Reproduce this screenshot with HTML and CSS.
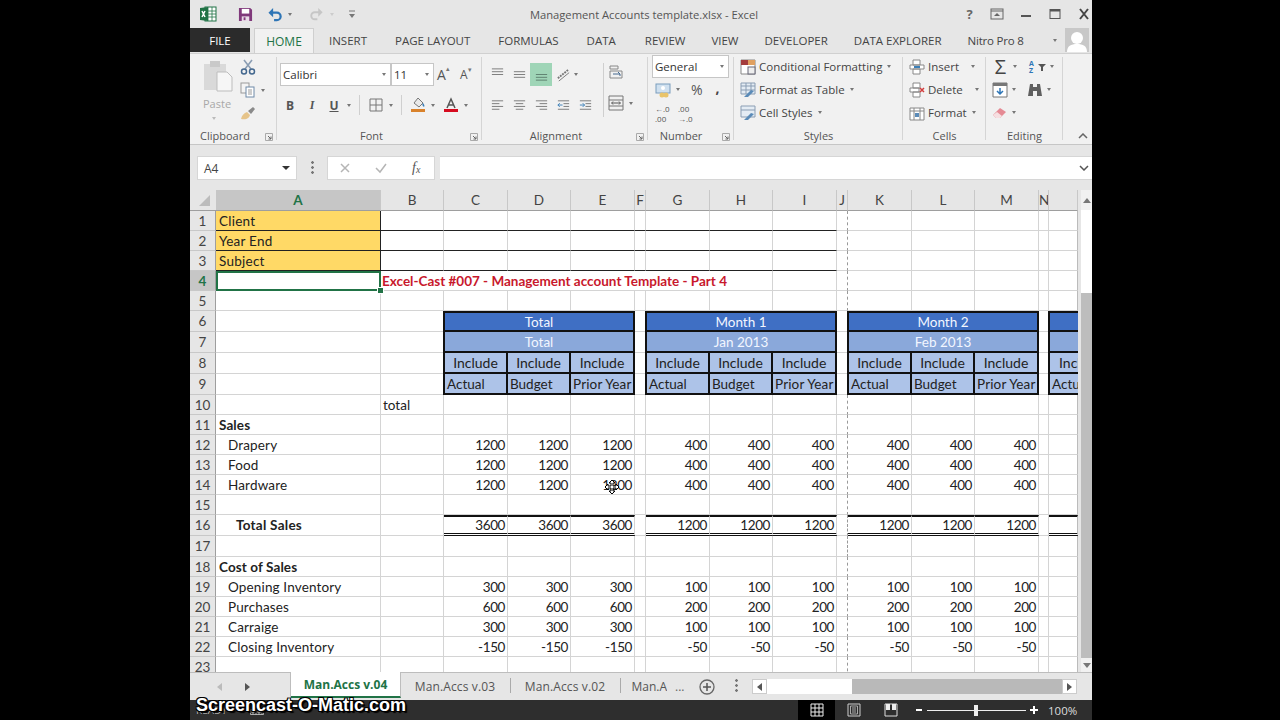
FILE: index.html
```html
<!DOCTYPE html>
<html lang="en">
<head>
<meta charset="utf-8">
<title>Management Accounts template.xlsx - Excel</title>
<link rel="stylesheet" href="styles.css">
</head>
<body>
<div class="app">
  <header class="titlebar">
    <div class="qat">
      <svg class="ic xl" viewBox="0 0 18 18"><rect x="6" y="2" width="11" height="14" fill="#fff" stroke="#217346"/><path d="M9 2v14M13 2v14M6 6h11M6 9h11M6 12h11" stroke="#217346" stroke-width=".8"/><path d="M1 3l8-1v14l-8-1z" fill="#217346"/><path d="M3 6l3 6M6 6l-3 6" stroke="#fff" stroke-width="1.5"/></svg>
      <svg class="ic save" viewBox="0 0 16 16"><path d="M1 1h12l2 2v12H1z" fill="#80397b"/><rect x="4" y="2" width="8" height="5" fill="#fff"/><rect x="4" y="10" width="8" height="5" fill="#e8dbe7"/><rect x="6" y="11" width="2" height="3" fill="#80397b"/></svg>
      <svg class="ic undo" viewBox="0 0 16 16"><path d="M3 6h7a4 4 0 0 1 0 8H7" fill="none" stroke="#2e75b6" stroke-width="2.4"/><path d="M6 1L1 6l5 5z" fill="#2e75b6"/></svg><i class="car q1"></i>
      <svg class="ic redo" viewBox="0 0 16 16"><path d="M13 6H6a4 4 0 0 0 0 8h3" fill="none" stroke="#c6c6c6" stroke-width="2.2"/><path d="M10 1l5 5-5 5z" fill="#c6c6c6"/></svg><i class="car q2"></i>
      <svg class="ic cust" viewBox="0 0 8 10"><path d="M1 2h6" stroke="#777"/><path d="M1 5h6L4 9z" fill="#777"/></svg>
    </div>
    <div class="doc">Management Accounts template.xlsx - Excel</div>
    <div class="win">
      <span class="help">?</span>
      <svg class="wb" viewBox="0 0 14 12"><rect x="1" y="1" width="12" height="10" fill="none" stroke="#666"/><path d="M1 3h12" stroke="#666"/><path d="M7 5l3 3H4z" fill="#666"/></svg>
      <svg class="wb" viewBox="0 0 14 12"><path d="M2 8h10" stroke="#555" stroke-width="2"/></svg>
      <svg class="wb" viewBox="0 0 14 12"><rect x="2" y="1.5" width="10" height="9" fill="none" stroke="#555"/><path d="M2 2.5h10" stroke="#555" stroke-width="2"/></svg>
      <svg class="wb" viewBox="0 0 14 12"><path d="M3 1l8 10M11 1l-8 10" stroke="#444" stroke-width="2"/></svg>
    </div>
  </header>

  <nav class="tabs">
    <span class="file">FILE</span>
    <span class="home">HOME</span>
    <div class="tablist">
      <span>INSERT</span><span>PAGE LAYOUT</span><span>FORMULAS</span><span>DATA</span><span class="m0">REVIEW</span><span class="m1">VIEW</span><span class="m2">DEVELOPER</span><span class="m2">DATA EXPLORER</span><span class="m1 nitro">Nitro Pro 8</span>
    </div>
    <i class="car tabcar"></i>
    <svg class="avatar" viewBox="0 0 24 24"><rect width="24" height="24" fill="#c8c8c8"/><circle cx="12" cy="10" r="6" fill="#fff"/><path d="M2 24c0-6 4-8 10-8s10 2 10 8z" fill="#fff"/></svg>
  </nav>

  <section class="ribbon">
    <div class="grp g-clip">
      <div class="gbody clip">
        <div class="paste">
          <svg class="bigic" viewBox="0 0 30 32"><rect x="1" y="4" width="22" height="26" fill="#d9d9d9"/><rect x="7" y="1" width="10" height="6" fill="#c9c9c9"/><path d="M14 12h10l5 5v14H14z" fill="#f6f6f6" stroke="#bdbdbd"/></svg>
          <span class="pl">Paste</span><i class="car pc"></i>
        </div>
        <div class="cliptools">
          <svg class="ci" viewBox="0 0 16 16"><path d="M4 1l7 9M12 1L5 10" stroke="#8a9db3" stroke-width="1.6"/><circle cx="4" cy="12.5" r="2.5" fill="none" stroke="#44688f" stroke-width="1.5"/><circle cx="12" cy="12.5" r="2.5" fill="none" stroke="#44688f" stroke-width="1.5"/></svg>
          <div class="cirow"><svg class="ci" viewBox="0 0 16 16"><rect x="1" y="1" width="8" height="10" fill="#f4f4f4" stroke="#9a9a9a"/><rect x="6" y="5" width="8" height="10" fill="#fff" stroke="#6f8aa8"/><path d="M8 8h4M8 10h4M8 12h4" stroke="#9a9a9a"/></svg><i class="car"></i></div>
          <svg class="ci" viewBox="0 0 16 16"><path d="M1 14c1-4 3-6 6-7l3 3c-1 3-3 5-9 4z" fill="#e6c48a"/><path d="M8 6l5-4 2 2-4 5z" fill="#8a8a8a"/></svg>
        </div>
      </div>
      <div class="glabel lbl-clip"><span>Clipboard</span><svg class="launch" viewBox="0 0 8 8"><path d="M.5 .5h7v7h-7z" fill="none" stroke="#aaa"/><path d="M3 3l3 3M6 3.500V6H3.500" fill="none" stroke="#666"/></svg></div>
    </div>

    <div class="grp g-font">
      <div class="gbody fontb">
        <div class="frow">
          <div class="sel fname"><span>Calibri</span><i class="car"></i></div>
          <div class="sel fsize"><span>11</span><i class="car"></i></div>
          <span class="agrow">A<sup>▴</sup></span><span class="ashrink">A<sup>▾</sup></span>
        </div>
        <div class="frow f2">
          <b class="fb">B</b><em class="fi">I</em><u class="fu">U</u><i class="car"></i><span class="vs"></span>
          <svg class="ai" viewBox="0 0 16 16"><path d="M2 2h12v12H2zM8 2v12M2 8h12" fill="none" stroke="#777"/></svg><i class="car"></i><span class="vs"></span>
          <svg class="ai" viewBox="0 0 16 16"><path d="M8 1l5 5-4 4-5-4z" fill="#e9e9e9" stroke="#777"/><path d="M13 6c1 1 2 3 1 4-2-1-2-3-1-4z" fill="#3b7fb8"/><rect x="1" y="12" width="14" height="3" fill="#d9822b"/></svg><i class="car"></i>
          <svg class="ai acol" viewBox="0 0 16 16"><path d="M4 11L8 2l4 9M5.500 8h5" fill="none" stroke="#555" stroke-width="1.500"/><rect x="1" y="12" width="14" height="3" fill="#d60b1f"/></svg><i class="car"></i>
        </div>
      </div>
      <div class="glabel lbl-font"><span>Font</span><svg class="launch" viewBox="0 0 8 8"><path d="M.5 .5h7v7h-7z" fill="none" stroke="#aaa"/><path d="M3 3l3 3M6 3.500V6H3.500" fill="none" stroke="#666"/></svg></div>
    </div>

    <div class="grp g-align">
      <div class="gbody alignb">
        <div class="arows">
          <div class="arow">
            <span class="ab"><svg viewBox="0 0 16 16"><path d="M2 2h12M2 5h12M2 8h12" stroke="#777"/></svg></span>
            <span class="ab"><svg viewBox="0 0 16 16"><path d="M2 5h12M2 8h12M2 11h12" stroke="#777"/></svg></span>
            <span class="ab on"><svg viewBox="0 0 16 16"><path d="M2 8h12M2 11h12M2 14h12" stroke="#5d7f6e"/></svg></span>
            <span class="ab"><svg viewBox="0 0 16 16"><path d="M2 12L13 3" stroke="#777" stroke-width="2" stroke-dasharray="2 1"/><path d="M3 15l11-9" stroke="#777"/></svg></span><i class="car"></i>
          </div>
          <div class="arow">
            <span class="ab"><svg viewBox="0 0 16 16"><path d="M2 3h12M2 6h8M2 9h12M2 12h8" stroke="#777"/></svg></span>
            <span class="ab"><svg viewBox="0 0 16 16"><path d="M2 3h12M4 6h8M2 9h12M4 12h8" stroke="#777"/></svg></span>
            <span class="ab"><svg viewBox="0 0 16 16"><path d="M2 3h12M6 6h8M2 9h12M6 12h8" stroke="#777"/></svg></span>
            <span class="ab"><svg viewBox="0 0 16 16"><path d="M2 3h12M8 6h6M8 9h6M2 12h12" stroke="#777"/><path d="M2 7.500h5M4 5.500l-2 2 2 2" fill="none" stroke="#3b7fb8"/></svg></span>
            <span class="ab"><svg viewBox="0 0 16 16"><path d="M2 3h12M8 6h6M8 9h6M2 12h12" stroke="#777"/><path d="M2 7.500h5M5 5.500l2 2-2 2" fill="none" stroke="#3b7fb8"/></svg></span>
          </div>
        </div>
        <span class="vs tall"></span>
        <div class="acol2">
          <svg class="ai" viewBox="0 0 16 16"><path d="M2 2h8v3H2zM2 7h12v7H2z" fill="none" stroke="#888"/><path d="M5 10h7l-2-2M12 10v2" fill="none" stroke="#44688f"/></svg>
          <div class="cirow"><svg class="ai" viewBox="0 0 16 16"><path d="M1 1h14v14H1zM1 5h14M1 11h14" fill="none" stroke="#777"/><path d="M4 8h8M5 6.500L3.500 8 5 9.500M11 6.500L12.500 8 11 9.500" fill="none" stroke="#555"/></svg><i class="car"></i></div>
        </div>
      </div>
      <div class="glabel lbl-align"><span>Alignment</span><svg class="launch" viewBox="0 0 8 8"><path d="M.5 .5h7v7h-7z" fill="none" stroke="#aaa"/><path d="M3 3l3 3M6 3.500V6H3.500" fill="none" stroke="#666"/></svg></div>
    </div>

    <div class="grp g-num">
      <div class="gbody numb">
        <div class="sel nfmt"><span>General</span><i class="car"></i></div>
        <div class="nrow">
          <svg class="ai" viewBox="0 0 16 16"><rect x="1" y="2" width="14" height="9" fill="#cfe0ef" stroke="#7b9dbd"/><circle cx="8" cy="6" r="2" fill="#fff"/><circle cx="7" cy="13" r="2.500" fill="#e9c46a"/><circle cx="11" cy="13" r="2.500" fill="#e9c46a"/></svg><i class="car"></i>
          <span class="pct">%</span><span class="comma">,</span>
        </div>
        <div class="nrow n3">
          <span class="dec"><i>←.0</i><i>.00</i></span><span class="dec"><i>.00</i><i>→.0</i></span>
        </div>
      </div>
      <div class="glabel lbl-num"><span>Number</span><svg class="launch" viewBox="0 0 8 8"><path d="M.5 .5h7v7h-7z" fill="none" stroke="#aaa"/><path d="M3 3l3 3M6 3.500V6H3.500" fill="none" stroke="#666"/></svg></div>
    </div>

    <div class="grp g-sty">
      <div class="gbody list">
        <div class="li"><svg class="ai" viewBox="0 0 16 16"><path d="M1 1h14v14H1z" fill="#fff" stroke="#888"/><rect x="1" y="1" width="7" height="5" fill="#a33c3c"/><rect x="8" y="1" width="7" height="5" fill="#e0a060"/><rect x="8" y="8" width="7" height="7" fill="#eee" stroke="#667"/></svg><span>Conditional Formatting</span><i class="car"></i></div>
        <div class="li"><svg class="ai" viewBox="0 0 16 16"><path d="M1 1h14v11H1z" fill="#e4ecf4" stroke="#8a9db3"/><path d="M1 4h14M1 8h14M6 1v11M11 1v11" stroke="#8a9db3"/><path d="M4 15l7-7 3 1-6 6z" fill="#5b8bb8"/></svg><span>Format as Table</span><i class="car"></i></div>
        <div class="li"><svg class="ai" viewBox="0 0 16 16"><path d="M1 1h14v11H1z" fill="#e4ecf4" stroke="#8a9db3"/><path d="M1 5h14" stroke="#8a9db3"/><path d="M4 15l7-7 3 1-6 6z" fill="#5b8bb8"/></svg><span>Cell Styles</span><i class="car"></i></div>
      </div>
      <div class="glabel"><span>Styles</span></div>
    </div>

    <div class="grp g-cell">
      <div class="gbody list">
        <div class="li"><svg class="ai" viewBox="0 0 16 16"><path d="M4 1h7v5H4zM1 6h14v4H1zM4 10h7v5H4z" fill="#fff" stroke="#888"/><path d="M5 8h6" stroke="#3b7fb8" stroke-width="2"/></svg><span>Insert</span><i class="car gapc"></i></div>
        <div class="li"><svg class="ai" viewBox="0 0 16 16"><path d="M4 1h7v5H4zM1 6h9v4H1zM4 10h7v5H4z" fill="#fff" stroke="#888"/><path d="M11 6l4 4M15 6l-4 4" stroke="#d23c3c" stroke-width="1.500"/></svg><span>Delete</span><i class="car gapc"></i></div>
        <div class="li"><svg class="ai" viewBox="0 0 16 16"><path d="M1 3h14v12H1zM1 6h14M5 3v12M11 3v12" fill="#fff" stroke="#888"/><rect x="6" y="8" width="4" height="4" fill="#5b8bb8"/></svg><span>Format</span><i class="car"></i></div>
      </div>
      <div class="glabel"><span>Cells</span></div>
    </div>

    <div class="grp g-edit">
      <div class="gbody editb">
        <div class="erow"><span class="sum">Σ</span><i class="car"></i><span class="az"><b>A</b><b>Z</b></span><svg class="fn" viewBox="0 0 8 8"><path d="M0 1h8L5 4v4H3V4z" fill="#555"/></svg><i class="car"></i></div>
        <div class="erow"><svg class="ai" viewBox="0 0 16 16"><path d="M1 1h14v14H1z" fill="#fff" stroke="#777"/><path d="M1 1h14v3H1z" fill="#777"/><path d="M8 6v6M5 9l3 3 3-3" fill="none" stroke="#2e75b6" stroke-width="1.500"/></svg><i class="car e1"></i><svg class="ai bino" viewBox="0 0 16 16"><path d="M3 2h3v3h4V2h3l2 12h-5V9H6v5H1z" fill="#5f5f5f"/></svg><i class="car"></i></div>
        <div class="erow"><svg class="ai" viewBox="0 0 16 16"><path d="M1 10l7-7 6 4-6 6H4z" fill="#e58a94"/><path d="M1 10l3 3h4l2-2-5-4z" fill="#f6dfe1"/></svg><i class="car"></i></div>
      </div>
      <div class="glabel"><span>Editing</span></div>
    </div>
    <svg class="collapse" viewBox="0 0 10 6"><path d="M1 5l4-4 4 4" fill="none" stroke="#666" stroke-width="1.500"/></svg>
  </section>

  <section class="fbar">
    <div class="namebox"><span>A4</span><i class="car dark"></i></div>
    <span class="dots"></span>
    <div class="fbtns">
      <svg class="fx-ic" viewBox="0 0 12 12"><path d="M2 2l8 8M10 2l-8 8" stroke="#b5b5b5" stroke-width="1.500"/></svg>
      <svg class="fx-ic" viewBox="0 0 12 12"><path d="M1 6l4 4 6-8" fill="none" stroke="#b5b5b5" stroke-width="1.500"/></svg>
      <span class="fx">f<sub>x</sub></span>
    </div>
    <div class="finput"><svg class="chev" viewBox="0 0 10 6"><path d="M1 1l4 4 4-4" fill="none" stroke="#555" stroke-width="1.500"/></svg></div>
  </section>

  <section class="sheet">
    <div class="gridwrap">
      <table class="grid">
        <colgroup><col class="c-rh"><col class="c-a"><col class="c-63"><col class="c-64"><col class="c-63"><col class="c-64"><col class="c-11"><col class="c-64"><col class="c-63"><col class="c-64"><col class="c-11"><col class="c-64"><col class="c-63"><col class="c-64"><col class="c-10"><col class="c-29"></colgroup>
        <tr class="h21 ch"><td class="corner"><svg viewBox="0 0 12 12"><path d="M12 1v11H1z" fill="#bcbcbc"/></svg></td><td class="sel-h">A</td><td>B</td><td>C</td><td>D</td><td>E</td><td>F</td><td>G</td><td>H</td><td>I</td><td>J</td><td>K</td><td>L</td><td>M</td><td>N</td><td></td></tr>
        <tr class="h20"><td class="rh">1</td><td class="yel">Client</td><td class="ul"></td><td class="ul"></td><td class="ul"></td><td class="ul"></td><td class="ul"></td><td class="ul"></td><td class="ul"></td><td class="ul"></td><td class="j"></td><td></td><td></td><td></td><td></td><td></td></tr>
        <tr class="h20"><td class="rh">2</td><td class="yel">Year End</td><td class="ul"></td><td class="ul"></td><td class="ul"></td><td class="ul"></td><td class="ul"></td><td class="ul"></td><td class="ul"></td><td class="ul"></td><td class="j"></td><td></td><td></td><td></td><td></td><td></td></tr>
        <tr class="h20"><td class="rh">3</td><td class="yel">Subject</td><td class="ul"></td><td class="ul"></td><td class="ul"></td><td class="ul"></td><td class="ul"></td><td class="ul"></td><td class="ul"></td><td class="ul"></td><td class="j"></td><td></td><td></td><td></td><td></td><td></td></tr>
        <tr class="h20"><td class="rh sel-h">4</td><td class="active"><span class="handle"></span></td><td class="title" colspan="7">Excel-Cast #007 - Management account Template - Part 4</td><td></td><td class="j"></td><td></td><td></td><td></td><td></td><td></td></tr>
        <tr class="h20"><td class="rh">5</td><td></td><td></td><td></td><td></td><td></td><td></td><td></td><td></td><td></td><td class="j"></td><td></td><td></td><td></td><td></td><td></td></tr>
        <tr class="h21"><td class="rh">6</td><td></td><td></td><td class="b1 first" colspan="3">Total</td><td></td><td class="b1 first" colspan="3">Month 1</td><td class="j"></td><td class="b1 first" colspan="3">Month 2</td><td></td><td class="b1 first cut"></td></tr>
        <tr class="h21"><td class="rh">7</td><td></td><td></td><td class="b2 first" colspan="3">Total</td><td></td><td class="b2 first" colspan="3">Jan 2013</td><td class="j"></td><td class="b2 first" colspan="3">Feb 2013</td><td></td><td class="b2 first cut"></td></tr>
        <tr class="h21"><td class="rh">8</td><td></td><td></td><td class="b3 ctr first">Include</td><td class="b3 ctr">Include</td><td class="b3 ctr">Include</td><td></td><td class="b3 ctr first">Include</td><td class="b3 ctr">Include</td><td class="b3 ctr">Include</td><td class="j"></td><td class="b3 ctr first">Include</td><td class="b3 ctr">Include</td><td class="b3 ctr">Include</td><td></td><td class="b3 first cut inc">Include</td></tr>
        <tr class="h21"><td class="rh">9</td><td></td><td></td><td class="b3 first">Actual</td><td class="b3">Budget</td><td class="b3 tight">Prior Year</td><td></td><td class="b3 first">Actual</td><td class="b3">Budget</td><td class="b3 tight">Prior Year</td><td class="j"></td><td class="b3 first">Actual</td><td class="b3">Budget</td><td class="b3 tight">Prior Year</td><td></td><td class="b3 first cut">Actual</td></tr>
        <tr class="h20"><td class="rh">10</td><td></td><td>total</td><td></td><td></td><td></td><td></td><td></td><td></td><td></td><td class="j"></td><td></td><td></td><td></td><td></td><td></td></tr>
        <tr class="h20"><td class="rh">11</td><td class="lab bold">Sales</td><td></td><td></td><td></td><td></td><td></td><td></td><td></td><td></td><td class="j"></td><td></td><td></td><td></td><td></td><td></td></tr>
        <tr class="h20"><td class="rh">12</td><td class="i1">Drapery</td><td></td><td class="n">1200</td><td class="n">1200</td><td class="n">1200</td><td></td><td class="n">400</td><td class="n">400</td><td class="n">400</td><td class="j"></td><td class="n">400</td><td class="n">400</td><td class="n">400</td><td></td><td></td></tr>
        <tr class="h20"><td class="rh">13</td><td class="i1">Food</td><td></td><td class="n">1200</td><td class="n">1200</td><td class="n">1200</td><td></td><td class="n">400</td><td class="n">400</td><td class="n">400</td><td class="j"></td><td class="n">400</td><td class="n">400</td><td class="n">400</td><td></td><td></td></tr>
        <tr class="h20"><td class="rh">14</td><td class="i1">Hardware</td><td></td><td class="n">1200</td><td class="n">1200</td><td class="n">1200</td><td></td><td class="n">400</td><td class="n">400</td><td class="n">400</td><td class="j"></td><td class="n">400</td><td class="n">400</td><td class="n">400</td><td></td><td></td></tr>
        <tr class="h20"><td class="rh">15</td><td></td><td></td><td></td><td></td><td></td><td></td><td></td><td></td><td></td><td class="j"></td><td></td><td></td><td></td><td></td><td></td></tr>
        <tr class="h21"><td class="rh">16</td><td class="i2 bold">Total Sales</td><td></td><td class="n tot">3600</td><td class="n tot">3600</td><td class="n tot">3600</td><td></td><td class="n tot">1200</td><td class="n tot">1200</td><td class="n tot">1200</td><td class="j"></td><td class="n tot">1200</td><td class="n tot">1200</td><td class="n tot">1200</td><td></td><td class="tot"></td></tr>
        <tr class="h21"><td class="rh">17</td><td></td><td></td><td></td><td></td><td></td><td></td><td></td><td></td><td></td><td class="j"></td><td></td><td></td><td></td><td></td><td></td></tr>
        <tr class="h20"><td class="rh">18</td><td class="lab bold">Cost of Sales</td><td></td><td></td><td></td><td></td><td></td><td></td><td></td><td></td><td class="j"></td><td></td><td></td><td></td><td></td><td></td></tr>
        <tr class="h20"><td class="rh">19</td><td class="i1">Opening Inventory</td><td></td><td class="n">300</td><td class="n">300</td><td class="n">300</td><td></td><td class="n">100</td><td class="n">100</td><td class="n">100</td><td class="j"></td><td class="n">100</td><td class="n">100</td><td class="n">100</td><td></td><td></td></tr>
        <tr class="h20"><td class="rh">20</td><td class="i1">Purchases</td><td></td><td class="n">600</td><td class="n">600</td><td class="n">600</td><td></td><td class="n">200</td><td class="n">200</td><td class="n">200</td><td class="j"></td><td class="n">200</td><td class="n">200</td><td class="n">200</td><td></td><td></td></tr>
        <tr class="h20"><td class="rh">21</td><td class="i1">Carraige</td><td></td><td class="n">300</td><td class="n">300</td><td class="n">300</td><td></td><td class="n">100</td><td class="n">100</td><td class="n">100</td><td class="j"></td><td class="n">100</td><td class="n">100</td><td class="n">100</td><td></td><td></td></tr>
        <tr class="h20"><td class="rh">22</td><td class="i1">Closing Inventory</td><td></td><td class="n">-150</td><td class="n">-150</td><td class="n">-150</td><td></td><td class="n">-50</td><td class="n">-50</td><td class="n">-50</td><td class="j"></td><td class="n">-50</td><td class="n">-50</td><td class="n">-50</td><td></td><td></td></tr>
        <tr class="h20"><td class="rh">23</td><td></td><td></td><td></td><td></td><td></td><td></td><td></td><td></td><td></td><td class="j"></td><td></td><td></td><td></td><td></td><td></td></tr>
      </table>
      <svg class="cursor" viewBox="0 0 16 16"><path d="M8 1l3 3H9v3h3V5l3 3-3 3V9H9v3h2l-3 3-3-3h2V9H4v2L1 8l3-3v2h3V4H5z" fill="#fff" stroke="#000"/></svg>
    </div>
    <div class="vscroll">
      <span class="sb-btn"><i class="tri up"></i></span>
      <span class="sb-track"><span class="sb-thumb"></span></span>
      <span class="sb-btn dn"><i class="tri down"></i></span>
    </div>
  </section>

  <section class="sheets">
    <div class="navs"><i class="tri left pale"></i><i class="tri right"></i></div>
    <span class="stab act">Man.Accs v.04</span>
    <span class="stab s1">Man.Accs v.03</span>
    <span class="stab s1">Man.Accs v.02</span>
    <span class="stab s2">Man.A</span>
    <span class="more">...</span>
    <svg class="plus" viewBox="0 0 16 16"><circle cx="8" cy="8" r="7" fill="none" stroke="#666" stroke-width="1.300"/><path d="M4 8h8M8 4v8" stroke="#555" stroke-width="1.500"/></svg>
    <span class="dots sd"></span>
    <div class="hscroll">
      <span class="hb"><i class="tri left"></i></span>
      <span class="hthumb"></span>
      <span class="htrack"></span>
      <span class="hb"><i class="tri right"></i></span>
    </div>
  </section>

  <footer class="status">
    <span class="ready">READY</span>
    <svg class="kbd" viewBox="0 0 14 10"><path d="M.5 4.500h13v5H.5zM3 4.500v5M6 4.500v5M9 4.500v5M12 4.500v5M.5 7h13" fill="none" stroke="#ccc" stroke-width=".8"/></svg>
    <div class="sright">
      <span class="view on"><svg viewBox="0 0 14 14"><path d="M1 1h12v12H1zM5 1v12M9 1v12M1 5h12M1 9h12" fill="none" stroke="#eee"/></svg></span>
      <span class="view"><svg viewBox="0 0 14 14"><path d="M1 1h12v12H1z" fill="none" stroke="#ccc"/><path d="M3.500 3h7v8h-7zM5 5h4M5 7h4M5 9h4" fill="none" stroke="#ccc" stroke-width=".8"/></svg></span>
      <span class="view"><svg viewBox="0 0 14 14"><path d="M1 1h12v12H1z" fill="none" stroke="#ddd"/><path d="M2 1h4v6H2zM8 1h4v6H8z" fill="#eee"/></svg></span>
      <div class="zoom">
        <svg class="zi" viewBox="0 0 8 8"><path d="M1 4h6" stroke="#fff" stroke-width="2"/></svg>
        <span class="ztrack"><span class="zthumb"></span></span>
        <svg class="zi" viewBox="0 0 8 8"><path d="M0 4h8M4 0v8" stroke="#fff" stroke-width="2"/></svg>
      </div>
      <span class="pc100">100%</span>
    </div>
  </footer>
  <div class="wm">Screencast-O-Matic.com</div>
</div>
</body>
</html>
```
FILE: styles.css
```css
* { box-sizing: border-box; }
html, body { margin: 0; height: 100%; background: #000; overflow: hidden; }
body { display: flex; justify-content: flex-start; padding-left: 190px; }
.app {
  position: relative; width: 902px; height: 720px; display: flex; flex-direction: column;
  background: #e6e6e6; color: #444; font: 12px "Open Sans", sans-serif; overflow: hidden;
}
i { font-style: normal; }

.car { display: inline-block; width: 0; height: 0; border: 2.5px solid transparent; border-top: 3px solid #777; border-bottom: 0; flex: none; }
.car.dark { border-top-color: #333; border-width: 4px 4px 0; }

/* title bar */
.titlebar { height: 28px; flex: none; display: flex; align-items: center; position: relative; }
.qat { display: flex; align-items: center; padding-left: 9px; width: 339px; flex: none; }
.ic { display: block; flex: none; }
.xl { width: 18px; height: 18px; }
.save { width: 15px; height: 15px; margin-left: 21px; }
.undo { width: 16px; height: 15px; margin-left: 14px; }
.q1 { margin: 0 0 0 5px; }
.redo { width: 15px; height: 14px; margin-left: 17px; }
.q2 { margin-left: 6px; border-top-color: #ccc; }
.cust { width: 8px; height: 10px; margin-left: 14px; }
.doc { width: 230px; text-align: center; white-space: nowrap; color: #555; font-size: 11.2px; }
.win { margin-left: auto; display: flex; align-items: center; width: 132px; padding-right: 1px; }
.help { width: 17px; margin-left: 4px; font-weight: 700; font-size: 13px; color: #666; text-align: center; }
.wb { width: 14px; height: 12px; margin-left: 15px; flex: none; }

/* tabs */
.tabs { height: 25px; flex: none; display: flex; align-items: stretch; position: relative; }
.file { width: 60px; height: 24px; background: #2b2b2b; color: #fff; display: flex; align-items: center; justify-content: center; font-size: 11.5px; }
.home { width: 60px; margin-left: 4px; background: #f1f1f1; border: 1px solid #cfcfcf; border-bottom: 0; color: #217346; display: flex; align-items: center; justify-content: center; font-size: 12px; }
.tablist { display: flex; align-items: center; gap: 28px; padding-left: 15px; font-size: 11.5px; color: #444; white-space: nowrap; width: 739px; flex: none; }
.m0 { margin-left: 1px; }
.m1 { margin-left: -2px; }
.m2 { margin-left: -2px; }
.nitro { letter-spacing: -.2px; }
.tabcar { align-self: center; }
.avatar { width: 24px; height: 24px; margin-left: 8px; flex: none; }

/* ribbon */
.ribbon { height: 92px; flex: none; display: flex; background: #f1f1f1; border-top: 1px solid #d0d0d0; border-bottom: 1px solid #c6c6c6; position: relative; color: #444; }
.grp { display: flex; flex-direction: column; flex: none; position: relative; }
.grp::after { content: ""; position: absolute; right: 0; top: 3px; bottom: 4px; width: 1px; background: #d5d5d5; }
.gbody { height: 73px; flex: none; }
.glabel { height: 17px; display: flex; align-items: center; justify-content: center; font-size: 11px; color: #555; position: relative; }
.launch { width: 8px; height: 8px; position: absolute; right: 4px; top: 6px; }
.g-clip { width: 87px; }
.g-font { width: 205px; }
.g-align { width: 166px; }
.g-num { width: 86px; }
.g-sty { width: 169px; }
.g-cell { width: 83px; }
.g-edit { width: 77px; }
.lbl-clip { justify-content: flex-start; padding-left: 10px; }
.lbl-font { padding-right: 16px; }
.lbl-align { padding-right: 18px; }
.lbl-num { padding-right: 20px; }
.collapse { width: 10px; height: 6px; position: absolute; right: 4px; top: 79px; }

.clip { display: flex; }
.paste { width: 50px; padding: 6px 0 0 13px; display: flex; flex-direction: column; align-items: flex-start; }
.bigic { width: 30px; height: 32px; }
.pl { font-size: 11px; color: #a8a8a8; margin-top: 4px; line-height: 15px; }
.pc { margin: 6px 0 0 9px; border-top-color: #bbb; }
.cliptools { display: flex; flex-direction: column; padding-top: 5px; gap: 7px; }
.ci { width: 16px; height: 16px; display: block; flex: none; }
.cirow { display: flex; align-items: center; gap: 5px; }

.fontb { padding: 9px 0 0 3px; }
.frow { display: flex; align-items: center; }
.sel { background: #fff; border: 1px solid #c6c6c6; display: flex; align-items: center; justify-content: space-between; padding: 0 4px 0 2px; font-size: 11.5px; color: #333; }
.fname { width: 111px; height: 23px; }
.fsize { width: 43px; height: 23px; }
.agrow, .ashrink { font-size: 13px; position: relative; color: #555; }
.agrow { margin-left: 3px; font-size: 14px; width: 23px; }
.ashrink { width: 18px; font-size: 12px; }
.agrow sup, .ashrink sup { font-size: 7px; color: #777; position: absolute; top: -1px; margin-left: 0; }
.f2 { margin-top: 9px; height: 20px; }
.fb, .fi, .fu { font-size: 12px; color: #555; text-align: center; flex: none; }
.fb { font-family: "Open Sans", sans-serif; width: 20px; }
.fi { width: 24px; font-family: "Liberation Serif", serif; font-weight: 700; }
.fu { width: 20px; font-family: "Open Sans", sans-serif; font-weight: 700; }
.f2 .car { margin-left: 3px; }
.vs { width: 1px; height: 20px; background: #cfcfcf; margin: 0 8px 0 8px; flex: none; }
.ai { width: 16px; height: 16px; display: block; flex: none; }
.f2 .ai { margin-right: 2px; }
.f2 .acol { margin-left: 8px; }

.alignb { display: flex; padding: 9px 0 0 4px; }
.arow { display: flex; align-items: center; height: 23px; }
.arow + .arow { margin-top: 8px; }
.ab { width: 22px; height: 23px; display: flex; align-items: center; justify-content: center; flex: none; }
.ab svg { width: 15px; height: 15px; display: block; }
.ab.on { background: #9fd5b7; }
.vs.tall { height: 54px; margin: 0 4px 0 auto; }
.acol2 { display: flex; flex-direction: column; gap: 15px; padding-top: 1px; width: 40px; flex: none; }

.numb { padding: 1px 0 0 4px; }
.nfmt { width: 77px; height: 23px; }
.nrow { display: flex; align-items: center; padding: 0 0 0 3px; height: 23px; }
.nrow.n3 { margin-top: 1px; }
.nrow .car { margin-left: 5px; }
.pct { font-size: 14px; margin-left: 11px; color: #555; }
.comma { font-size: 14px; font-weight: 700; margin-left: 13px; margin-top: -4px; }
.dec { display: flex; flex-direction: column; font-size: 8px; line-height: 10px; width: 23px; color: #555; }

.list { display: flex; flex-direction: column; padding: 1px 0 0 6px; }
.li { display: flex; align-items: center; height: 23px; white-space: nowrap; gap: 3px; font-size: 11.5px; }
.li .ai { margin-right: 0; }
.li .car { margin-left: 2px; }
.li .gapc { margin-left: 9px; }

.editb { padding: 1px 0 0 6px; }
.erow { display: flex; align-items: center; height: 23px; gap: 4px; }
.sum { width: 17px; font-size: 20px; color: #444; line-height: 20px; text-align: center; }
.az { display: flex; flex-direction: column; margin-left: 8px; font-size: 7px; line-height: 7px; color: #2e75b6; width: 7px; }
.az b { font-weight: 700; }
.fn { width: 8px; height: 8px; margin-left: -2px; }
.e1 { margin-right: 6px; }
.bino { margin-left: 1px; }

/* formula bar */
.fbar { height: 45px; flex: none; display: flex; padding: 11px 0 10px 7px; align-items: stretch; }
.namebox { width: 100px; background: #fff; border: 1px solid #d6d6d6; display: flex; align-items: center; justify-content: space-between; padding: 0 6px; font-size: 12px; color: #444; }
.dots { width: 3px; flex: none; margin: 0 13px 0 14px; background: radial-gradient(circle at 1.500px 1.500px, #777 1.200px, transparent 1.500px) 0 5px / 3px 5px repeat-y; height: 15px; align-self: center; }
.fbtns { width: 108px; background: #fff; border: 1px solid #d6d6d6; display: flex; align-items: center; }
.fx-ic { width: 12px; height: 12px; margin-left: 11px; margin-right: 13px; flex: none; }
.fx { font: italic 14px "Liberation Serif", serif; color: #555; margin-left: 12px; }
.fx sub { font-size: 10px; vertical-align: -1px; }
.finput { flex: 1; margin-left: 5px; background: #fff; border-top: 1px solid #d6d6d6; border-bottom: 1px solid #d6d6d6; display: flex; align-items: center; justify-content: flex-end; padding-right: 3px; }
.chev { width: 10px; height: 6px; }

/* sheet */
.sheet { height: 482px; flex: none; display: flex; }
.gridwrap { width: 891px; flex: none; position: relative; overflow: hidden; }
.grid { border-collapse: separate; border-spacing: 0; table-layout: fixed; width: 888px; background: #fff; font: 13.500px Lato, sans-serif; color: #222; }
.c-rh { width: 26px; } .c-a { width: 165px; } .c-64 { width: 64px; } .c-63 { width: 63px; }
.c-11 { width: 11px; } .c-10 { width: 10px; } .c-29 { width: 29px; }
.h20 { height: 20px; } .h21 { height: 21px; }
.grid td { padding: 0 2px; border-right: 1px solid #d4d4d4; border-bottom: 1px solid #d4d4d4; white-space: nowrap; overflow: hidden; line-height: 16px; }
.grid td:last-child { border-right-color: #bbb; }
.grid .ch td { background: #e6e6e6; text-align: center; color: #444; border-bottom-color: #9e9e9e; border-right-color: #c8c8c8; padding: 0; }
.grid td.corner { padding: 0 0 0 8px; border-right: 0; }
.corner svg { width: 12px; height: 12px; display: block; }
.grid td.rh { background: #e6e6e6; text-align: center; color: #444; padding: 0; border-right-color: #9e9e9e; border-bottom-color: #c8c8c8; }
.grid td.sel-h { background: #c6c6c6; color: #217346; font-weight: 700; }
.grid td.yel { background: #ffd966; border-right: 1px solid #222; border-bottom: 1px solid #222; padding-left: 3px; letter-spacing: .25px; }
.grid td.ul { border-bottom: 1px solid #222; }
.grid td.j { border-right: 1px dashed #999; }
.grid td.active { position: relative; overflow: visible; outline: 2px solid #217346; outline-offset: -2px; border: 0; }
.handle { position: absolute; right: -3px; bottom: -3px; width: 5px; height: 5px; background: #217346; border: 1px solid #fff; box-sizing: content-box; z-index: 1; }
.grid td.title { color: #c8182c; font-weight: 700; padding-left: 1px; }
.bold { font-weight: 700; }
.grid td.lab { padding-left: 3px; letter-spacing: .1px; }
.grid td.i1 { padding-left: 12px; letter-spacing: .15px; }
.grid td.i2 { padding-left: 20px; letter-spacing: .25px; }
.grid td.n { text-align: right; padding-right: 2px; letter-spacing: -.4px; }
.grid td.b1, .grid td.b2 { text-align: center; color: #f2f6ff; border-right: 2px solid #111; border-bottom: 2px solid #111; }
.grid td.b1 { background: #3f6fc4; border-top: 2px solid #111; }
.grid td.b2 { background: #8aa8da; }
.grid td.b3 { background: #adc3e8; border-right: 2px solid #111; border-bottom: 2px solid #111; color: #222; padding-left: 2px; }
.grid td.first { border-left: 1px solid #111; box-shadow: -1px 0 0 #111; padding-left: 2px; }
.grid td.ctr { text-align: center; padding: 0; font-size: 14px; }
.grid td.tight { padding: 0 0 0 2px; letter-spacing: .15px; }
.grid td.cut { border-right: 0; padding-left: 2px; }
.grid td.inc { padding-left: 9px; font-size: 14px; }
.grid td.tot { border-top: 2px solid #111; border-bottom: 3px double #111; }
.cursor { position: absolute; left: 414px; top: 289px; width: 16px; height: 16px; }

.vscroll { width: 11px; flex: none; display: flex; flex-direction: column; background: #fff; }
.sb-btn { height: 20px; flex: none; display: flex; align-items: center; justify-content: center; background: #f1f1f1; }
.sb-btn.dn { height: 14px; }
.sb-track { flex: 1; display: flex; flex-direction: column; justify-content: flex-end; }
.sb-thumb { height: 365px; background: #bdbdbd; }
.tri { display: block; width: 0; height: 0; border: 4px solid transparent; }
.tri.up { border-top: 0; border-bottom: 5px solid #777; }
.tri.down { border-bottom: 0; border-top: 5px solid #777; }
.tri.left { border-left: 0; border-right: 5px solid #555; }
.tri.right { border-right: 0; border-left: 5px solid #555; }
.tri.pale { border-right-color: #bbb; }

/* sheet tabs */
.sheets { height: 28px; flex: none; display: flex; align-items: stretch; border-top: 1px solid #bdbdbd; }
.navs { width: 101px; display: flex; align-items: center; gap: 23px; padding-left: 27px; flex: none; border-right: 1px solid #bdbdbd; }
.stab { display: flex; align-items: center; justify-content: center; white-space: nowrap; font-size: 12px; color: #555; flex: none; }
.stab.act { width: 110px; background: #fff; margin-top: -1px; height: 26px; padding-top: 1px; color: #217346; font-weight: 700; border-bottom: 2px solid #217346; border-right: 1px solid #bdbdbd; }
.stab.s1 { width: 110px; position: relative; letter-spacing: .12px; padding-right: 2px; }
.stab.s1::after { content: ""; position: absolute; right: 0; top: 5px; height: 15px; width: 1px; background: #aaa; }
.stab.s2 { width: 46px; justify-content: flex-end; overflow: hidden; }
.more { margin-left: 8px; width: 24px; align-self: center; flex: none; font-size: 12px; color: #666; }
.plus { width: 16px; height: 16px; align-self: center; flex: none; }
.dots.sd { margin: 0 0 0 20px; }
.hscroll { margin-left: 14px; width: 325px; flex: none; align-self: center; height: 15px; display: flex; background: #b9b9b9; }
.hb { width: 15px; flex: none; background: #fff; border: 1px solid #ccc; display: flex; align-items: center; justify-content: center; }
.hthumb { width: 85px; flex: none; background: #fff; }
.htrack { flex: 1; }

/* status */
.status { height: 20px; flex: none; background: #2e2e2e; color: #ddd; display: flex; align-items: center; }
.ready { padding-left: 6px; font-size: 10px; color: #bbb; width: 60px; flex: none; }
.kbd { width: 14px; height: 10px; flex: none; }
.sright { margin-left: auto; display: flex; align-items: stretch; height: 20px; width: 294px; flex: none; }
.view { width: 37px; display: flex; align-items: center; justify-content: center; flex: none; }
.view.on { background: #000; }
.view svg { width: 14px; height: 14px; display: block; }
.zoom { display: flex; align-items: center; margin-left: 6px; width: 123px; flex: none; }
.zi { width: 8px; height: 8px; flex: none; display: block; }
.ztrack { width: 99px; height: 1px; background: #eee; margin: 0 4px; position: relative; flex: none; }
.zthumb { position: absolute; left: 47px; top: -5px; width: 4px; height: 11px; background: #eee; }
.pc100 { margin-left: 10px; font-size: 11.500px; color: #ddd; align-self: center; }

.wm {
  position: absolute; left: 6px; top: 696px; font: 700 18px/18px "Liberation Sans", sans-serif; color: #fff;
  text-shadow: 1px 1px 0 #000, -1px -1px 0 #000, 1px -1px 0 #000, -1px 1px 0 #000, 2px 2px 1px #000; white-space: nowrap;
}
```
